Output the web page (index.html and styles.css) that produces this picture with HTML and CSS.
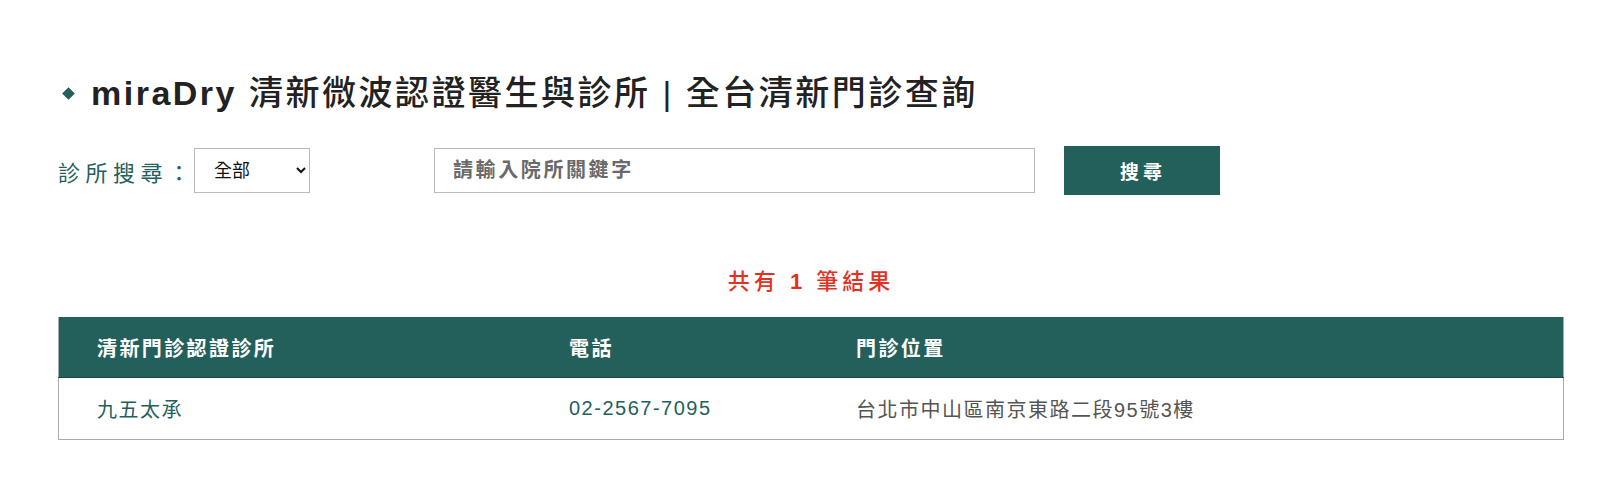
FILE: index.html
```html
<!DOCTYPE html>
<html lang="zh-Hant">
<head>
    <meta charset="UTF-8">
    <title>miraDry 清新微波認證醫生與診所</title>
    <link rel="stylesheet" href="styles.css">
</head>
<body>
    <div class="container">
        <h1 class="title"><span class="title-brand">miraDry</span> 清新微波認證醫生與診所 | 全台清新門診查詢</h1>

        <form class="search-row">
            <label class="search-label" for="area">診所搜尋：</label>
            <select id="area" class="search-select">
                <option>全部</option>
            </select>
            <input type="text" class="search-input" placeholder="請輸入院所關鍵字">
            <button type="button" class="search-btn">搜尋</button>
        </form>

        <div class="result-count">共有 <b>1</b> 筆結果</div>

        <table class="clinic-table">
            <thead>
                <tr>
                    <th class="col-name">清新門診認證診所</th>
                    <th class="col-phone">電話</th>
                    <th>門診位置</th>
                </tr>
            </thead>
            <tbody>
                <tr>
                    <td class="clinic-name">九五太承</td>
                    <td class="clinic-phone">02-2567-7095</td>
                    <td class="clinic-addr">台北市中山區南京東路二段95號3樓</td>
                </tr>
            </tbody>
        </table>
    </div>
</body>
</html>
```

FILE: styles.css
```css
:root {
    --teal: #235f5b;
    --red: #e2321f;
    --text: #222;
    --gray: #555;
}

body {
    margin: 0;
    padding: 0;
    background: #fff;
    font-family: "Liberation Sans", "Noto Sans CJK TC", Arial, sans-serif;
    color: var(--text);
}

.container {
    width: 1506px;
    padding: 72px 0 0 58px;
}

.title {
    position: relative;
    margin: 0;
    padding-left: 33px;
    font-size: 34px;
    font-weight: 500;
    letter-spacing: 2.5px;
    line-height: 42px;
    color: #222;
}

.title::before {
    content: "";
    position: absolute;
    left: 6px;
    top: 17px;
    width: 9px;
    height: 9px;
    background: var(--teal);
    transform: rotate(45deg);
}

.title-brand {
    font-weight: 700;
}

.search-row {
    display: flex;
    align-items: center;
    margin-top: 32px;
    height: 49px;
}

.search-label {
    width: 136px;
    font-size: 22px;
    letter-spacing: 5.5px;
    color: var(--teal);
    white-space: nowrap;
}

.search-select {
    width: 116px;
    height: 45px;
    padding: 0 10px 0 15px;
    border: 1px solid #bbb;
    border-radius: 0;
    background: #fff;
    font-family: inherit;
    font-size: 18px;
    color: #111;
}

.search-input {
    box-sizing: border-box;
    width: 601px;
    height: 45px;
    margin-left: 124px;
    padding: 0 18px;
    border: 1px solid #bbb;
    font-family: inherit;
    font-size: 20px;
    outline: none;
}

.search-input::placeholder {
    color: #6a6a6a;
    font-weight: 700;
    letter-spacing: 2.6px;
}

.search-btn {
    width: 156px;
    height: 49px;
    margin-left: 29px;
    border: none;
    background: var(--teal);
    color: #fff;
    font-family: inherit;
    font-size: 19px;
    font-weight: 700;
    letter-spacing: 4px;
    padding-left: 8px;
    cursor: pointer;
}

.result-count {
    margin-top: 71px;
    text-align: center;
    font-size: 22px;
    font-weight: 500;
    letter-spacing: 4px;
    color: var(--red);
    line-height: 32px;
}

.result-count b {
    font-weight: 700;
}

.clinic-table {
    width: 1506px;
    margin-top: 19px;
    border-collapse: collapse;
    border: 1px solid #aaa;
    border-top: none;
}

.clinic-table th {
    height: 60px;
    padding: 0 0 0 38px;
    background: var(--teal);
    color: #fff;
    font-size: 20px;
    font-weight: 700;
    letter-spacing: 2.4px;
    text-align: left;
}

.clinic-table .col-name {
    width: 434px;
}

.clinic-table .col-phone {
    width: 249px;
}

.clinic-table td {
    height: 61px;
    padding: 0 0 0 38px;
    font-size: 20px;
    letter-spacing: 1.5px;
    border-top: 1px solid #1a4643;
}

.clinic-name,
.clinic-phone {
    color: var(--teal);
}

.clinic-addr {
    color: var(--gray);
}
```
